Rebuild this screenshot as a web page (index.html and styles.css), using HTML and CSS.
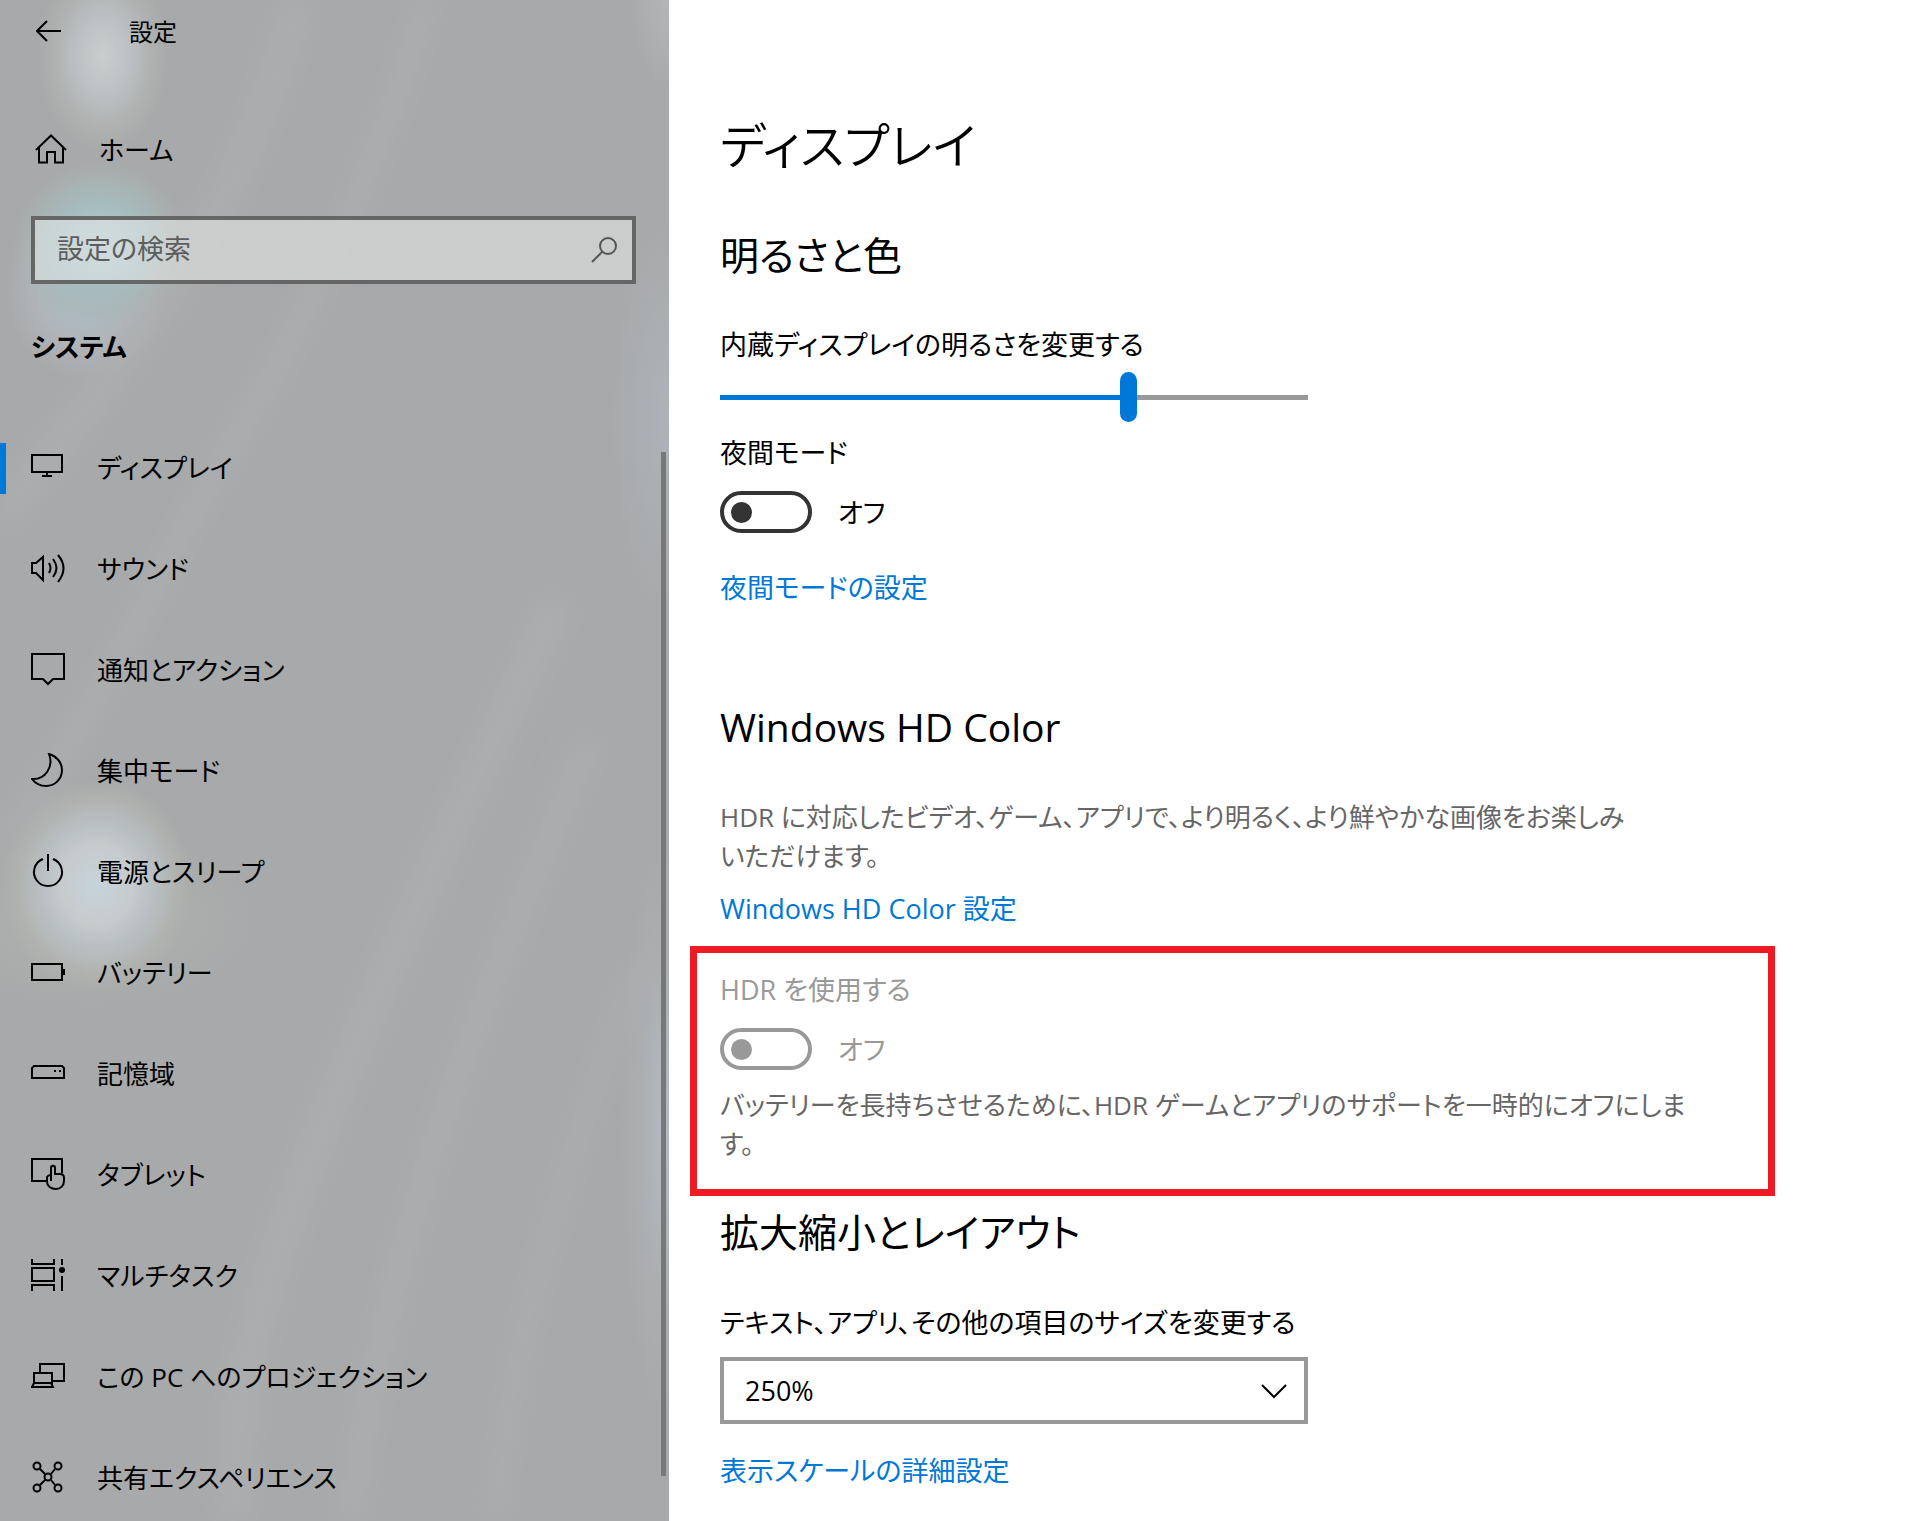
FILE: index.html
```html
<!DOCTYPE html>
<html lang="ja">
    <head>
        <title>設定</title>
        <meta charset="UTF-8">
        <meta name="viewport" content="width=device-width, initial-scale=1.0">
        <link rel="stylesheet" href="styles.css">
    </head>
    <body>
        <aside class="sidebar">
            <!--LIGHT STREAKS BEHIND THE MENU-->
            <svg class="streaks" viewBox="0 0 669 1521" preserveAspectRatio="none" aria-hidden="true">
                <path d="M310 -40C270 110 220 220 150 320S40 470 -40 560" stroke-width="34"/>
                <path d="M440 -40C390 130 330 280 240 430S90 740 -40 900" stroke-width="24"/>
                <path d="M560 600C400 930 320 1120 275 1260S240 1440 230 1560" stroke-width="36"/>
                <path d="M590 740C430 1120 380 1290 345 1560" stroke-width="26"/>
                <path d="M640 960C530 1260 510 1380 490 1560" stroke-width="20"/>
            </svg>
            <header class="titlebar">
                <button class="back" aria-label="戻る">
                    <svg width="26" height="22" viewBox="0 0 26 22"><path d="M11 1L1 11L11 21M1 11H25"/></svg>
                </button>
                <span class="app-name">設定</span>
            </header>
            <a class="home" href="#">
                <svg width="32" height="30" viewBox="0 0 32 30"><path d="M1 16L16 1.500L31 16M4 13.500V28.500H12V18H20V28.500H28V13.500"/></svg>
                <span>ホーム</span>
            </a>
            <div class="search">
                <input type="search" placeholder="設定の検索" aria-label="設定の検索">
                <svg width="26" height="26" viewBox="0 0 26 26"><circle cx="17" cy="9" r="8"/><path d="M11.500 14.500L1 25"/></svg>
            </div>
            <h2 class="group">システム</h2>
            <nav class="menu">
                <a class="active" href="#">
                    <svg width="34" height="34" viewBox="0 0 34 34"><path d="M1 5H31V22H1ZM16 22V26M11 26H21"/></svg>
                    <span>ディスプレイ</span>
                </a>
                <a href="#">
                    <svg width="34" height="34" viewBox="0 0 34 34"><path d="M1 12H5L12 6V29L5 22H1ZM18 12Q21 17 18 22M22 8Q29 17 22 26M27 4Q38 17 27 31"/></svg>
                    <span>サウンド</span>
                </a>
                <a href="#">
                    <svg width="34" height="34" viewBox="0 0 34 34"><path d="M1 2H33V27H22L17 32L12 27H1Z"/></svg>
                    <span>通知とアクション</span>
                </a>
                <a href="#">
                    <svg width="34" height="34" viewBox="0 0 34 34"><path d="M18 1C25 3 31 9 31 17C31 26 24 33 15 33C9 33 4 30 1 26C14 27 23 14 18 1Z"/></svg>
                    <span>集中モード</span>
                </a>
                <a href="#">
                    <svg width="34" height="34" viewBox="0 0 34 34"><path d="M17 0V17M12 5A14 14 0 1 0 22 5"/></svg>
                    <span>電源とスリープ</span>
                </a>
                <a href="#">
                    <svg width="34" height="34" viewBox="0 0 34 34"><path d="M1 9H31V25H1ZM31 15H33V19H31"/></svg>
                    <span>バッテリー</span>
                </a>
                <a href="#">
                    <svg width="34" height="34" viewBox="0 0 34 34"><path d="M1 12L3 10H31L33 12V22H1Z"/><path class="fill" d="M23 14h2v2h-2zM28 14h2v2h-2z"/></svg>
                    <span>記憶域</span>
                </a>
                <a href="#">
                    <svg width="34" height="34" viewBox="0 0 34 34"><path d="M16 24H1V2H31V16"/><path d="M20 24V11C20 8 24 8 24 11V17H29C32 17 33 18 33 21V24C33 29 29 32 25 32C20 32 16 29 16 25V20Q17 18 20 18"/></svg>
                    <span>タブレット</span>
                </a>
                <a href="#">
                    <svg width="34" height="34" viewBox="0 0 34 34"><path d="M1 1V6H23V1M1 10H23V23H1ZM1 33V27H23V33M31 1V7M31 18V33"/><circle class="fill" cx="31" cy="12" r="3"/></svg>
                    <span>マルチタスク</span>
                </a>
                <a href="#">
                    <svg width="34" height="34" viewBox="0 0 34 34"><path d="M9 14V5H33V22H21M3 14H21V24H3ZM3 24L1 28H22L20 24"/></svg>
                    <span>この PC へのプロジェクション</span>
                </a>
                <a href="#">
                    <svg width="34" height="34" viewBox="0 0 34 34"><circle cx="6" cy="6" r="3.500"/><circle cx="27" cy="6" r="3.500"/><circle cx="6" cy="28" r="3.500"/><circle cx="27" cy="28" r="3.500"/><circle cx="17" cy="17" r="3.500"/><path d="M9 9L14 14M24 9L20 14M9 25L14 20M24 25L20 20"/></svg>
                    <span>共有エクスペリエンス</span>
                </a>
            </nav>
            <div class="scrollbar"></div>
        </aside>
        <main class="content">
            <h1>ディスプレイ</h1>
            <section class="brightness">
                <h2>明るさと色</h2>
                <label for="level">内蔵ディスプレイの明るさを変更する</label>
                <input type="range" id="level" min="0" max="100" value="70">
                <label for="night">夜間モード</label>
                <div class="switch">
                    <input type="checkbox" id="night">
                    <span>オフ</span>
                </div>
                <a class="link" href="#">夜間モードの設定</a>
            </section>
            <section class="hd-color">
                <h2>Windows HD Color</h2>
                <p>HDR に対応したビデオ、ゲーム、アプリで、より明るく、より鮮やかな画像をお楽しみ<br>いただけます。</p>
                <a class="link" href="#">Windows HD Color 設定</a>
            </section>
            <section class="hdr">
                <label for="hdr">HDR を使用する</label>
                <div class="switch">
                    <input type="checkbox" id="hdr" disabled>
                    <span>オフ</span>
                </div>
                <p>バッテリーを長持ちさせるために、HDR ゲームとアプリのサポートを一時的にオフにしま<br>す。</p>
            </section>
            <section class="scale">
                <h2>拡大縮小とレイアウト</h2>
                <label for="size">テキスト、アプリ、その他の項目のサイズを変更する</label>
                <div class="dropdown">
                    <select id="size">
                        <option>100%</option>
                        <option>200%</option>
                        <option selected>250%</option>
                    </select>
                    <svg width="26" height="16" viewBox="0 0 26 16"><path d="M1 1L13 13L25 1"/></svg>
                </div>
                <a class="link" href="#">表示スケールの詳細設定</a>
            </section>
        </main>
    </body>
</html>
```
FILE: styles.css
```css
* {
    box-sizing: border-box;
}
body {
    margin: 0;
    display: flex;
    min-height: 100vh;
    background-color: white;
    color: black;
    font-family: "Open Sans", "Noto Sans CJK JP", sans-serif;
    font-feature-settings: "palt";
    font-size: 27px;
    line-height: 39px;
}
h1, h2, p {
    margin: 0;
    font-weight: normal;
}
a {
    color: inherit;
    text-decoration: none;
}
input, select, button {
    margin: 0;
    font: inherit;
    font-feature-settings: inherit;
}
svg {
    flex: none;
    fill: none;
    stroke: black;
    stroke-width: 2;
}
svg .fill {
    fill: black;
    stroke: none;
}

/* left menu */
.sidebar {
    position: relative;
    flex: 0 0 669px;
    display: flex;
    flex-direction: column;
    font-size: 26px;
    background:
        radial-gradient(ellipse 66px 96px at 103px 56px, #cbcdcc 0%, #bbc1c4 40%, rgba(178, 180, 178, 0.7) 75%, rgba(178, 180, 178, 0) 100%),
        radial-gradient(ellipse 88px 84px at 100px 245px, #b3c8cc 0%, #a6bcbf 50%, rgba(168, 182, 180, 0.6) 80%, rgba(168, 178, 176, 0) 100%),
        radial-gradient(ellipse 80px 90px at 85px 290px, #acc0d0 0%, rgba(178, 184, 188, 0.8) 60%, rgba(178, 180, 180, 0) 100%),
        radial-gradient(ellipse 95px 105px at 97px 885px, #c6d3dc 0%, #c6cbcc 38%, #b9c0c3 58%, rgba(178, 180, 176, 0.7) 85%, rgba(178, 180, 176, 0) 100%),
        radial-gradient(ellipse 170px 90px at 90px 920px, #b0b2b0 0%, rgba(176, 178, 176, 0) 100%),
        radial-gradient(ellipse 50px 300px at 669px 1130px, #b2bdc6 0%, rgba(173, 176, 179, 0.7) 60%, rgba(173, 176, 179, 0) 100%),
        radial-gradient(ellipse 60px 200px at 669px 420px, #adb3ba 0%, rgba(173, 179, 186, 0) 100%),
        radial-gradient(ellipse 40px 90px at 669px 0px, #b3b6b7 0%, rgba(179, 182, 183, 0) 100%),
        #a8a9aa;
}
.streaks {
    position: absolute;
    width: 100%;
    height: 100%;
    stroke: #b0b2b3;
    opacity: 0.5;
    filter: blur(12px);
    clip-path: inset(0);
}
.sidebar > :not(.streaks):not(.scrollbar) {
    position: relative;
}
.titlebar {
    display: flex;
    align-items: center;
    gap: 67px;
    height: 62px;
    padding-left: 36px;
    font-size: 24px;
}
.back {
    display: flex;
    padding: 0;
    border: none;
    background-color: transparent;
}
.home {
    display: flex;
    align-items: center;
    gap: 32px;
    height: 50px;
    margin-top: 63px;
    padding-left: 35px;
}
.home svg {
    margin-bottom: 3px;
}
.search {
    display: flex;
    align-items: center;
    height: 68px;
    margin: 41px 33px 0 31px;
    padding: 0 15px 0 22px;
    border: 4px solid #666;
    background-color: rgba(238, 239, 238, 0.5);
}
.search input {
    flex: 1;
    min-width: 0;
    padding: 0 0 4px;
    border: none;
    outline: none;
    background-color: transparent;
    font-size: 27px;
}
.search input::placeholder {
    color: #5c5e5e;
}
.search svg {
    stroke: #555;
}
.group {
    margin: 44px 0 0 31px;
    font-size: 26px;
    font-weight: bold;
}
.menu {
    display: flex;
    flex-direction: column;
    gap: 50px;
    margin-top: 76px;
}
.menu a {
    display: flex;
    align-items: center;
    gap: 32px;
    height: 51px;
    padding-left: 25px;
    border-left: 6px solid transparent;
}
.menu a.active {
    border-color: #0078d7;
}
.menu svg {
    margin-bottom: 3px;
}
.scrollbar {
    position: absolute;
    top: 452px;
    right: 3px;
    bottom: 45px;
    width: 5px;
    background-color: #777879;
}

/* right side */
.content {
    flex: 1;
    min-width: 0;
    padding: 110px 145px 20px 21px;
}
h1 {
    padding-left: 30px;
    font-size: 49px;
    font-weight: 350;
    line-height: 70px;
}
.content section {
    display: flex;
    flex-direction: column;
    align-items: flex-start;
    padding: 0 30px;
}
.content h2 {
    font-size: 39px;
    line-height: 50px;
}
.content p {
    color: #666;
    font-size: 26px;
    white-space: nowrap;
}
.content .link {
    color: #0078d7;
}
.brightness {
    margin-top: 50px;
}
.brightness h2 {
    margin-bottom: 45px;
}
.brightness .link {
    margin-top: 35px;
}
input[type="range"] {
    appearance: none;
    width: 588px;
    height: 50px;
    margin: 8px 0 11px;
    background: linear-gradient(to right, #0078d7 70%, #999 70%) center / 100% 5px no-repeat;
}
input[type="range"]::-webkit-slider-thumb {
    appearance: none;
    width: 17px;
    height: 50px;
    border-radius: 9px;
    background-color: #0078d7;
}
.switch {
    display: flex;
    align-items: center;
    gap: 26px;
    height: 42px;
    margin-top: 19px;
}
.switch input {
    appearance: none;
    display: flex;
    align-items: center;
    width: 92px;
    height: 42px;
    padding-left: 7px;
    border: 4px solid #333;
    border-radius: 21px;
}
.switch input::before {
    content: "";
    width: 21px;
    height: 21px;
    border-radius: 50%;
    background-color: #333;
}
.switch input:disabled {
    border-color: #999;
}
.switch input:disabled::before {
    background-color: #999;
}
.hd-color {
    margin-top: 95px;
}
.hd-color h2 {
    margin-bottom: 46px;
}
.hd-color .link {
    margin-top: 13px;
}
.content .hdr {
    margin-top: 18px;
    padding: 17px 23px 25px;
    border: 7px solid #ed1c24;
}
.hdr label,
.hdr .switch {
    color: #999;
}
.hdr p {
    margin-top: 16px;
}
.scale {
    margin-top: 11px;
}
.scale h2 {
    margin-bottom: 46px;
}
.dropdown {
    position: relative;
    width: 588px;
    margin: 15px 0 27px;
}
.dropdown select {
    appearance: none;
    display: block;
    width: 100%;
    height: 67px;
    padding: 0 21px;
    border: 4px solid #999;
    border-radius: 0;
    background-color: white;
    color: black;
}
.dropdown svg {
    position: absolute;
    top: 27px;
    right: 21px;
    pointer-events: none;
}
```
